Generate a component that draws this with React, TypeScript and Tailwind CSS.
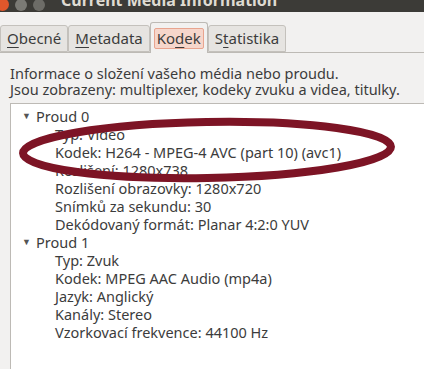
import React from "react";

const font = { fontFamily: '"Noto Sans", "Open Sans", sans-serif' };

function Tab({ label, u, active }: { label: string; u: number; active?: boolean }) {
  const text = (
    <>
      {label.slice(0, u)}
      <span className="underline underline-offset-[3px] decoration-1">{label[u]}</span>
      {label.slice(u + 1)}
    </>
  );
  if (active) {
    return (
      <div className="relative -mb-px flex h-[31px] items-center self-end rounded-t-[3px] border border-b-0 border-[#bdbab5] bg-[#f2f1f0] px-[3px]">
        <span className="rounded-[2px] border border-[#e8a48f] bg-[#f6d6cb] px-[2px] leading-[19px]">{text}</span>
      </div>
    );
  }
  return (
    <div className="flex h-[27px] items-center self-end rounded-t-[3px] border border-[#c4c1bc] bg-[#e6e4e1] px-[6px]">
      {text}
    </div>
  );
}

const stream0 = [
  "Typ: Video",
  "Kodek: H264 - MPEG-4 AVC (part 10) (avc1)",
  "Rozlišení: 1280x738",
  "Rozlišení obrazovky: 1280x720",
  "Snímků za sekundu: 30",
  "Dekódovaný formát: Planar 4:2:0 YUV",
];

const stream1 = [
  "Typ: Zvuk",
  "Kodek: MPEG AAC Audio (mp4a)",
  "Jazyk: Anglický",
  "Kanály: Stereo",
  "Vzorkovací frekvence: 44100 Hz",
];

function Stream({ title, rows }: { title: string; rows: string[] }) {
  return (
    <div className="leading-[18px]">
      <div className="flex h-[18px] items-center">
        <span className="w-[25px] pl-[11px] text-[9px] text-[#555]">▼</span>
        <span>{title}</span>
      </div>
      {rows.map((r) => (
        <div key={r} className="h-[18px] whitespace-nowrap pl-[44px]">
          {r}
        </div>
      ))}
    </div>
  );
}

export default function App() {
  return (
    <div className="relative h-[369px] w-[424px] overflow-hidden bg-[#f2f1f0] text-[14.5px] text-[#3c3c3c]" style={font}>
      <div className="flex h-[12px] items-start overflow-hidden bg-[#3c3b37]">
        <div className="mt-[-2px] flex items-center gap-[6px]">
          <span className="-ml-[4px] h-[13px] w-[13px] rounded-full bg-[#e0572b]" />
          <span className="h-[12px] w-[12px] rounded-full bg-[#7b7a75]" />
          <span className="h-[12px] w-[12px] rounded-full bg-[#6d6c67]" />
        </div>
        <span className="ml-[16px] mt-[-9px] whitespace-nowrap text-[16px] font-bold leading-[18px] text-[#dfdbd2]">Current Media Information</span>
      </div>

      <div className="mt-[12px] flex h-[29px] items-end border-b border-[#bdbab5] text-[15px]">
        <Tab label="Obecné" u={0} />
        <Tab label="Metadata" u={0} />
        <Tab label="Kodek" u={2} active />
        <Tab label="Statistika" u={1} />
      </div>

      <div className="pl-[10px] pt-[12px] leading-[16px]">
        <p>Informace o složení vašeho média nebo proudu.</p>
        <p>Jsou zobrazeny: multiplexer, kodeky zvuku a videa, titulky.</p>
      </div>

      <div className="ml-[10px] mt-[6px] h-[300px] border-l border-t border-[#bdbab5] bg-white pt-[3px]">
        <Stream title="Proud 0" rows={stream0} />
        <Stream title="Proud 1" rows={stream1} />
      </div>

      <svg className="pointer-events-none absolute left-0 top-0" width="424" height="369">
        <ellipse cx="207" cy="150" rx="184" ry="28" fill="none" stroke="#7d1425" strokeWidth="8" transform="rotate(-1 207 150)" />
      </svg>
    </div>
  );
}
